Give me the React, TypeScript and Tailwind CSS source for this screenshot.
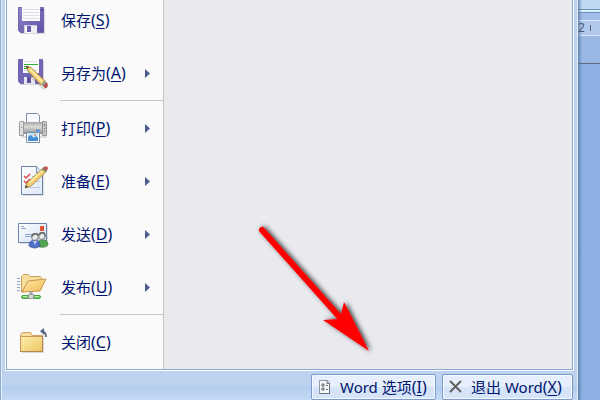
import type { ReactNode } from 'react';

const SaveIcon = () => (
  <svg width="32" height="33" viewBox="0 0 32 33" aria-hidden="true">
    <defs>
      <linearGradient id="disk" x1="0" y1="0" x2="1" y2="1">
        <stop offset="0" stopColor="#8f86c8" />
        <stop offset="1" stopColor="#6150a4" />
      </linearGradient>
    </defs>
    <path d="M4 5h25v25H4z" fill="#d6d6da" />
    <path d="M2.500 3.500h25v25h-23l-2-2z" fill="url(#disk)" stroke="#7467b4" />
    <path d="M6 3h18v14H6z" fill="#fbfbfd" />
    <path d="M7 5.500h16M7 8.500h16M7 11.500h16M7 14.500h16" stroke="#dcdee4" />
    <path d="M25 5h2v2h-2z" fill="#51458f" />
    <path d="M8 21h13v8H8z" fill="#c9c8dc" />
    <path d="M9 22h6v7H9z" fill="#fff" />
    <path d="M11 22h4v6h-4z" fill="#6d5eae" />
    <path d="M15 22h6v7h-6z" fill="#eceef2" />
  </svg>
);

const SaveAsIcon = () => (
  <svg width="32" height="33" viewBox="0 0 32 33" aria-hidden="true">
    <path d="M4 4h24v24H4z" fill="#d6d6da" />
    <path d="M2.500 2.500h24v24h-22l-2-2z" fill="#7365b5" stroke="#7064ae" />
    <path d="M7 2h16v14H7z" fill="#fbfbfd" />
    <path d="M8 4.500h13M8 13.500h13" stroke="#dcdee4" />
    <path d="M8 7.500h14M8 9.500h4" stroke="#2eb135" />
    <path d="M8 11.500h4" stroke="#2eb135" />
    <path d="M8 20h11v7H8z" fill="#e5e6ee" />
    <path d="M11 20h4v6h-4z" fill="#6151a0" />
    <path d="M12 14l2 5 14 13 3-2" fill="none" stroke="#777" strokeWidth="2" opacity=".25" />
    <path d="M10 9l5 1.500L29 24l-4 4L12 14z" fill="#f4cf74" stroke="#a57a38" strokeWidth=".8" />
    <path d="M14 12l12 12.500" stroke="#fff1b5" strokeWidth="1.500" />
    <path d="M10 9l3 1-1.500 2z" fill="#49432f" />
    <path d="M25 27l4-3.500 2 2-3.500 4z" fill="#92a28d" />
    <path d="M27 29l3.500-3.500q2 1.500 1 4t-3 1z" fill="#b74d49" />
  </svg>
);

const PrintIcon = () => (
  <svg width="32" height="33" viewBox="0 0 32 33" aria-hidden="true">
    <defs>
      <linearGradient id="printer" x1="0" y1="0" x2="0" y2="1">
        <stop offset="0" stopColor="#a5a5a6" />
        <stop offset=".4" stopColor="#dadada" />
        <stop offset="1" stopColor="#8c8d8f" />
      </linearGradient>
    </defs>
    <path d="M5 24h26v2H5z" fill="#ddd" />
    <path d="M10.500 1.500h11l2 2V12h-13z" fill="#f7f9fd" stroke="#7a90ac" />
    <path d="M5 10h24v12H5z" fill="url(#printer)" />
    <path d="M3.500 10.500q0-1 1-1h3v14h-4z" fill="#e0e0e0" stroke="#9a9a9a" />
    <path d="M26.500 9.500h3q1 0 1 1v13h-4z" fill="#c8c8c8" stroke="#959595" />
    <path d="M28.500 12v2M28.500 16v1M28.500 19v1M5.500 15v1" stroke="#777" />
    <path d="M8 19.500h18" stroke="#ababab" />
    <path d="M20 18.500h4" stroke="#4189ef" strokeWidth="1.500" />
    <path d="M10.500 20.500h13v10h-13z" fill="#fff" stroke="#7890ae" />
    <path d="M12 21h10v8H12z" fill="#c6e5f8" />
    <path d="M12 28v-3l3-2 3 3 2-2 2 2v3H12z" fill="#458dd2" />
    <circle cx="19" cy="23" r="1" fill="#df826b" />
  </svg>
);

const PrepareIcon = () => (
  <svg width="32" height="33" viewBox="0 0 32 33" className="overflow-visible" aria-hidden="true">
    <defs>
      <linearGradient id="sheet" x1="0" y1="0" x2="1" y2="1">
        <stop offset="0" stopColor="#fff" />
        <stop offset="1" stopColor="#dde7f7" />
      </linearGradient>
    </defs>
    <path d="M7 4h21v27H7z" fill="#ddd" />
    <path d="M5.500 1.500h15l6 6v22h-21z" fill="url(#sheet)" stroke="#6b83a5" />
    <path d="M20.500 1.500v6h6" fill="#dce6f5" stroke="#7890b0" />
    <path d="M16 11.500h6M16 16.500h8M9 22.500h15" stroke="#bdc9dd" />
    <path d="M8 11l2 2 4-4M8 16l2 2 4-4" fill="none" stroke="#d84a4c" strokeWidth="1.500" />
    <path d="M9 23l2-5L26 4l4 3-15 14z" fill="#f6cf71" stroke="#a67d3e" strokeWidth=".8" />
    <path d="M13 18L26 6" stroke="#fff0b0" strokeWidth="1.500" />
    <path d="M9 23l1-3 2 2z" fill="#4b4035" />
    <path d="M25.500 4l2-2 4 3.500-2 2z" fill="#849c7e" />
    <path d="M28 2q4-2 4 2l-2 2-3-2.500z" fill="#bd5955" />
  </svg>
);

const SendIcon = () => (
  <svg width="32" height="33" viewBox="0 0 32 33" className="overflow-visible" aria-hidden="true">
    <defs>
      <linearGradient id="mail" x1="0" y1="0" x2="1" y2="1">
        <stop offset="0" stopColor="#fff" />
        <stop offset="1" stopColor="#cfe0f5" />
      </linearGradient>
      <linearGradient id="face" x1="0" y1="0" x2="1" y2="1">
        <stop offset="0" stopColor="#777" />
        <stop offset=".5" stopColor="#f8f8f8" />
        <stop offset="1" stopColor="#aaa" />
      </linearGradient>
    </defs>
    <path d="M4 7h28v19H4z" fill="#ddd" />
    <path d="M2.500 5.500h28v19h-28z" fill="url(#mail)" stroke="#6b84ac" />
    <path d="M5 8.500h3M5 10.500h5M9 16.500h10M9 18.500h6" stroke="#8ba8d0" />
    <path d="M24 8h4v5h-4z" fill="#df5333" />
    <path d="M21 28q0-7 6-6 5 0 5 5-4 4-11 1z" fill="#53a653" stroke="#3e8442" strokeWidth=".8" />
    <circle cx="26" cy="18" r="3.500" fill="url(#face)" stroke="#737373" strokeWidth=".8" />
    <path d="M23 17q1-3 5-2l1 3" fill="none" stroke="#666" strokeWidth="1.500" />
    <path d="M13 28q0-6 6-6 5 0 5 6-5 4-11 0z" fill="#526fc6" stroke="#3e56a1" strokeWidth=".8" />
    <path d="M17 23l2 4 2-4z" fill="#bdcdf1" />
    <circle cx="19" cy="19" r="3.500" fill="url(#face)" stroke="#737373" strokeWidth=".8" />
    <path d="M16 18q1-3 5-2l1 2" fill="none" stroke="#666" strokeWidth="1.500" />
  </svg>
);

const PublishIcon = () => (
  <svg width="32" height="33" viewBox="0 0 32 33" aria-hidden="true">
    <defs>
      <linearGradient id="publish" x1="0" y1="0" x2="1" y2="1">
        <stop offset="0" stopColor="#ffe9a4" />
        <stop offset="1" stopColor="#efbb59" />
      </linearGradient>
    </defs>
    <path d="M1 7.500h3M1 10.500h3M1 13.500h3M1 16.500h3M1 19.500h3" stroke="#94a5bf" />
    <path d="M5.500 21V5.500l2-2h5l2 2h10l1 1V18z" fill="#f6dda0" stroke="#cba15c" />
    <path d="M6 21l6-11 18-2-6 12z" fill="url(#publish)" stroke="#c99848" />
    <path d="M15 20v6" stroke="#a2a5a7" strokeWidth="3" />
    <rect x="5.500" y="24.500" width="19" height="3" rx="1.500" fill="#6ac859" stroke="#48a548" />
    <path d="M12.500 23.500h5v4h-5z" fill="#d5d8d6" stroke="#959a98" />
    <path d="M7 25.500h4M19 25.500h4" stroke="#bbf1b0" />
  </svg>
);

const CloseIcon = () => (
  <svg width="32" height="33" viewBox="0 0 32 33" aria-hidden="true">
    <defs>
      <linearGradient id="folder" x1="0" y1="0" x2="1" y2="1">
        <stop offset="0" stopColor="#fff0ae" />
        <stop offset="1" stopColor="#ebc461" />
      </linearGradient>
    </defs>
    <path d="M6 10h22v17H6z" fill="#ddd9d1" />
    <path d="M4.500 24V8.500l2-2h8l2 3h10V24z" fill="#f7dda1" stroke="#d0a264" />
    <path d="M4.500 10.500h22v15h-22z" fill="url(#folder)" stroke="#cc9b58" />
    <path d="M4 25.500h22.500V10" fill="none" stroke="#b98453" />
    <path d="M26 5q4 1 4 6" fill="none" stroke="#60718d" strokeWidth="2" />
    <path d="M24 5l4-3v7z" fill="#526581" />
  </svg>
);

type Entry = { label: string; letter: string; icon: ReactNode; more?: boolean; divider?: boolean };

const entries: Entry[] = [
  { label: '保存', letter: 'S', icon: <SaveIcon /> },
  { label: '另存为', letter: 'A', icon: <SaveAsIcon />, more: true, divider: true },
  { label: '打印', letter: 'P', icon: <PrintIcon />, more: true },
  { label: '准备', letter: 'E', icon: <PrepareIcon />, more: true },
  { label: '发送', letter: 'D', icon: <SendIcon />, more: true },
  { label: '发布', letter: 'U', icon: <PublishIcon />, more: true, divider: true },
  { label: '关闭', letter: 'C', icon: <CloseIcon /> },
];

const Key = ({ letter }: { letter: string }) => (
  <span className="text-base leading-5">(<span className="underline underline-offset-2">{letter}</span>)</span>
);

const MenuItem = ({ label, letter, icon, more }: Entry) => (
  <button type="button" className="flex h-[53px] w-full shrink-0 items-center gap-3 pr-3 pl-[9px] text-left">
    <span className="w-8 shrink-0">{icon}</span>
    <span className="flex-1 pb-0.5 pl-px whitespace-nowrap">{label}<Key letter={letter} /></span>
    {more && (
      <svg width="6" height="9" viewBox="0 0 6 9" aria-hidden="true">
        <path d="M0 0l5 4.500L0 9z" fill="#4b5d8c" />
      </svg>
    )}
  </button>
);

const footerButton =
  'flex h-[26px] items-center rounded-[2px] border border-[#7d9cc9] bg-linear-to-b from-[#e6effb] from-50% to-[#d5e4f8] to-50% shadow-[inset_0_0_0_1px_#f4f9ff]';

export default function App() {
  return (
    <div className="flex h-screen overflow-hidden bg-[#8db0e2] font-['Noto_Sans','Noto_Sans_CJK_SC',sans-serif] text-[15px] leading-5 text-[#00156e]">
      <main className="flex min-w-0 flex-1 flex-col border-l border-[#91aacd] bg-[#bdd2ee]">
        <div className="flex min-h-0 flex-1 border-r border-l border-[#e4effc] px-[3px]">
          <div className="flex min-w-0 flex-1 border-x border-b border-white">
            <div className="flex min-w-0 flex-1 border-x border-b border-[#8ca8cf]">
              <nav aria-label="Office" className="flex w-[157px] shrink-0 flex-col justify-end overflow-hidden border-r border-[#c5c5c5] bg-[#fafafa]">
                {entries.map((entry) => (
                  <div key={entry.letter} className="shrink-0">
                    <MenuItem {...entry} />
                    {entry.divider && <hr className="ml-[53px] h-0.5 border-t border-[#c5c5c5]" />}
                  </div>
                ))}
              </nav>
              <section className="relative flex-1 bg-[#e9eaee]">
                <svg className="absolute right-[203px] bottom-2.5 overflow-visible" width="120" height="134" viewBox="0 0 120 134" aria-hidden="true">
                  <defs>
                    <filter id="shadow" x="-20%" y="-20%" width="150%" height="150%">
                      <feDropShadow dx="2" dy="0" stdDeviation="2.500" floodColor="#000" floodOpacity=".8" />
                    </filter>
                  </defs>
                  <g filter="url(#shadow)" fill="#f00">
                    <path d="M13 5L95 97" stroke="#f00" strokeWidth="6" strokeLinecap="round" />
                    <path d="M120 126L74 95l17-1 4-17z" />
                  </g>
                </svg>
              </section>
            </div>
          </div>
        </div>
        <footer className="flex h-[29px] shrink-0 items-start justify-end gap-1.5 border-r border-l border-[#e4effc] bg-linear-to-b from-[#bdd2ee] from-50% via-[#b0cbed] via-50% to-[#c5daf5] pt-[3px] pr-1">
          <button type="button" className={`${footerButton} w-[125px] pl-1.5`}>
            <svg width="14" height="16" viewBox="0 0 14 16" className="mr-2" aria-hidden="true">
              <path d="M1.500 1.500h8l2 2v11h-10z" fill="#f4f6f8" stroke="#8d99a5" />
              <path d="M9 1.500v3h3" fill="none" stroke="#68737d" />
              <path d="M11.500 4v10.500h-10" fill="none" stroke="#66727e" />
              <path d="M4 5h2v2H4zM4 9h2v2H4z" fill="#fff" stroke="#596573" />
              <path d="M8 6.500h2M8 10.500h2" stroke="#68737d" />
            </svg>
            <span className="whitespace-nowrap">Word 选项<Key letter="I" /></span>
          </button>
          <button type="button" className={`${footerButton} w-[131px] pl-1.5`}>
            <svg width="14" height="14" viewBox="0 0 14 14" className="mr-2" aria-hidden="true">
              <path d="M1 1l11 11M12 1L1 12" stroke="#606060" strokeWidth="2" />
            </svg>
            <span className="whitespace-nowrap">退出 Word<Key letter="X" /></span>
          </button>
        </footer>
      </main>
      <aside className="relative flex w-[22px] shrink-0 flex-col text-xs leading-3 text-[#465571]">
        <div className="h-[9px] bg-[#bfd8f4]" />
        <div className="h-1 border-t border-b border-t-[#7795b9] border-b-[#718fbd] bg-[#d9f3fb]" />
        <div className="h-[7px] bg-[#a2bee8]" />
        <div className="flex h-4 items-center border-y border-[#d9e7fa] bg-[#b3c9ec]">
          <span>2</span>
          <span className="ml-[5px] h-1.5 w-px bg-[#536078]" />
        </div>
        <div className="h-7 border-b border-[#606a7a] bg-[#9ab8e4]" />
        <div className="flex-1 bg-[#8db0e2]" />
        <div className="absolute inset-y-0 left-0 w-1 bg-linear-to-r from-[#476997]/70 to-[#476997]/0" />
      </aside>
    </div>
  );
}
